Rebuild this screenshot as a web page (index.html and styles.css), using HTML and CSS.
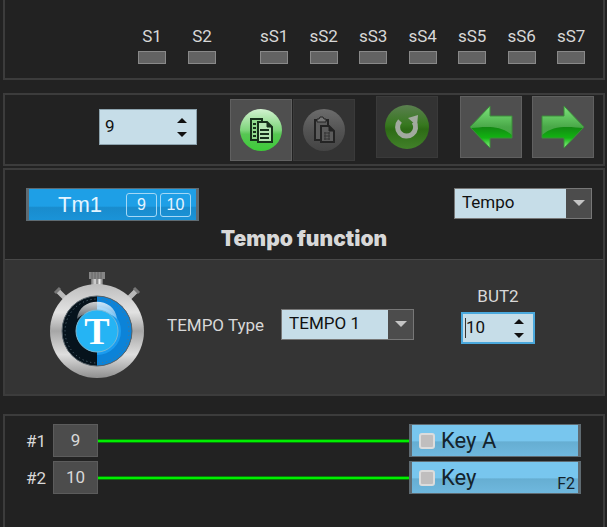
FILE: index.html
```html
<!doctype html>
<html lang="en">
<head>
  <meta charset="UTF-8"/>
  <meta name="viewport" content="width=device-width, initial-scale=1.0"/>
  <title>Tempo function</title>
  <link rel="stylesheet" href="styles.css">
</head>
<body>
  <section class="panel status">
    <div class="leds leds-main">
      <div class="led">S1</div>
      <div class="led">S2</div>
    </div>
    <div class="leds leds-sub">
      <div class="led">sS1</div>
      <div class="led">sS2</div>
      <div class="led">sS3</div>
      <div class="led">sS4</div>
      <div class="led">sS5</div>
      <div class="led">sS6</div>
      <div class="led">sS7</div>
    </div>
  </section>

  <section class="panel toolbar">
    <div class="spinner spinner-large">
      <input type="number" id="slotInput" value="9" aria-label="Slot"/>
      <div class="spinner-buttons">
        <button type="button" class="up" aria-label="Up"></button>
        <button type="button" class="down" aria-label="Down"></button>
      </div>
    </div>

    <div class="tool-group clipboard">
      <button type="button" class="tool" aria-label="Copy">
        <svg width="44" height="44" viewBox="0 0 44 44">
          <defs>
            <linearGradient id="ballGreen" x1="0" y1="0" x2="0" y2="1">
              <stop offset="0" stop-color="#d2f2d0"/>
              <stop offset="0.5" stop-color="#7fd57c"/>
              <stop offset="0.6" stop-color="#57c653"/>
              <stop offset="1" stop-color="#3ccc38"/>
            </linearGradient>
          </defs>
          <circle cx="22" cy="22" r="21" fill="url(#ballGreen)"/>
          <path d="M12 11h11v3h-4v18h-7z" fill="#8fd88c" stroke="#16301a" stroke-width="2"/>
          <path d="M14 16h3M14 20h3M14 24h3M14 28h3" stroke="#16301a" stroke-width="2"/>
          <path d="M19 14h9l5 5v15H19z" fill="#b4e5b1" stroke="#16301a" stroke-width="2"/>
          <path d="M28 14v5h5z" fill="#16301a" stroke="#16301a"/>
          <path d="M21 22h9M21 26h9M21 30h9" stroke="#16301a" stroke-width="2"/>
        </svg>
      </button>
      <button type="button" class="tool" aria-label="Paste" disabled>
        <svg width="44" height="44" viewBox="0 0 44 44">
          <defs>
            <linearGradient id="ballGray" x1="0" y1="0" x2="0" y2="1">
              <stop offset="0" stop-color="#6c6c6c"/>
              <stop offset="0.55" stop-color="#525252"/>
              <stop offset="1" stop-color="#444"/>
            </linearGradient>
          </defs>
          <circle cx="22" cy="22" r="21" fill="url(#ballGray)"/>
          <path d="M13 12h13v20H13z" fill="#5c5c5c" stroke="#242424" stroke-width="2"/>
          <path d="M15 14v-3h2l1-2h3l1 2h2v3z" fill="#777" stroke="#242424"/>
          <path d="M19 18h8l5 5v11H19z" fill="#5c5c5c" stroke="#242424" stroke-width="2"/>
          <path d="M27 18v5h5z" fill="#242424" stroke="#242424"/>
          <path d="M22 25h6M22 28h6M22 31h6M23 24v8M27 24v8" stroke="#343434"/>
        </svg>
      </button>
    </div>

    <button type="button" class="tool reset" aria-label="Reset" disabled>
      <svg width="46" height="46" viewBox="0 0 46 46">
        <defs>
          <linearGradient id="ballReset" x1="0" y1="0" x2="0" y2="1">
            <stop offset="0" stop-color="#5b7f50"/>
            <stop offset="0.45" stop-color="#37781f"/>
            <stop offset="0.55" stop-color="#2d6b15"/>
            <stop offset="1" stop-color="#42812a"/>
          </linearGradient>
        </defs>
        <circle cx="23" cy="23" r="22" fill="url(#ballReset)"/>
        <path d="M16 17a9 9 0 1 0 14 1" fill="none" stroke="#a2aa9f" stroke-width="5"/>
        <path d="M24 14l10-3l-1 11z" fill="#a2aa9f"/>
      </svg>
    </button>

    <div class="tool-group nav">
      <button type="button" class="tool" aria-label="Previous">
        <svg width="44" height="44" viewBox="0 0 44 44">
          <defs>
            <linearGradient id="arrowTop" x1="0" y1="0" x2="0" y2="1">
              <stop offset="0" stop-color="#7ee57c"/>
              <stop offset="0.5" stop-color="#49a848"/>
              <stop offset="1" stop-color="#3fa03e"/>
            </linearGradient>
            <linearGradient id="arrowLow" x1="0" y1="0" x2="0" y2="1">
              <stop offset="0" stop-color="#128812"/>
              <stop offset="0.5" stop-color="#12b412"/>
              <stop offset="1" stop-color="#a4ff9c"/>
            </linearGradient>
            <clipPath id="arrowClip"><path d="M1 22L21 1V11H43V33H21V43z"/></clipPath>
            <g id="arrowShape">
              <path d="M1 22L21 1V11H43V33H21V43z" fill="url(#arrowTop)"/>
              <path d="M1 23C15 22 32 19 44 31V44H1z" fill="url(#arrowLow)" clip-path="url(#arrowClip)"/>
              <path d="M1 22L21 1V11H43V33H21V43z" fill="none" stroke="#3c8d3b"/>
            </g>
          </defs>
          <use href="#arrowShape"/>
        </svg>
      </button>
      <button type="button" class="tool" aria-label="Next">
        <svg width="44" height="44" viewBox="0 0 44 44">
          <use href="#arrowShape" transform="translate(44 0) scale(-1 1)"/>
        </svg>
      </button>
    </div>
  </section>

  <section class="panel function">
    <div class="function-header">
      <div class="timer-tag">
        <span class="timer-name">Tm1</span>
        <span class="slot">9</span>
        <span class="slot">10</span>
      </div>
      <div class="select select-function">
        <select aria-label="Function">
          <option>Tempo</option>
        </select>
      </div>
    </div>
    <h1>Tempo function</h1>

    <div class="function-body">
      <svg class="stopwatch" width="94" height="108" viewBox="0 0 94 108">
        <defs>
          <linearGradient id="steel" x1="0" y1="0" x2="0" y2="1">
            <stop offset="0" stop-color="#bdbdbd"/>
            <stop offset="0.3" stop-color="#e2e2e2"/>
            <stop offset="0.5" stop-color="#a6a6a6"/>
            <stop offset="0.75" stop-color="#dedede"/>
            <stop offset="1" stop-color="#8f8f8f"/>
          </linearGradient>
          <linearGradient id="knob" x1="0" y1="0" x2="1" y2="0">
            <stop offset="0" stop-color="#6d6d6d"/>
            <stop offset="0.35" stop-color="#ddd"/>
            <stop offset="0.5" stop-color="#777"/>
            <stop offset="0.7" stop-color="#eee"/>
            <stop offset="1" stop-color="#666"/>
          </linearGradient>
          <linearGradient id="gloss" x1="0" y1="0" x2="0" y2="1">
            <stop offset="0" stop-color="#fff" stop-opacity="0.8"/>
            <stop offset="1" stop-color="#fff" stop-opacity="0.35"/>
          </linearGradient>
        </defs>
        <path d="M41 7h12v10H41z" fill="url(#knob)"/>
        <path d="M39 1h16v7H39z" fill="#858585"/>
        <path d="M42 1v7M45 1v7M48 1v7M51 1v7" stroke="#666"/>
        <path d="M8 20l7 7M86 20l-7 7" stroke="#b8b8b8" stroke-width="5"/>
        <path d="M5 22l5-5M89 22l-5-5" stroke="#777" stroke-width="3"/>
        <circle cx="47" cy="60" r="47" fill="url(#steel)"/>
        <circle cx="47" cy="60" r="35" fill="#06131c"/>
        <path d="M47 25a35 35 0 0 1 0 70z" fill="#0c83d8"/>
        <path d="M47 36a24 24 0 0 1 0 48z" fill="#1a9cf0"/>
        <circle cx="47" cy="60" r="32" fill="none" stroke="#5d7482" stroke-dasharray="1 3"/>
        <path d="M27 48C29 25 65 25 67 48C57 38 37 38 27 48z" fill="url(#gloss)"/>
        <circle cx="47" cy="60" r="21" fill="#25b4f4" stroke="#79bad6"/>
        <text x="47" y="73" class="stopwatch-letter">T</text>
        <circle cx="47" cy="60" r="35" fill="none" stroke="#59646b"/>
      </svg>

      <label class="type-label" for="tempoType">TEMPO Type</label>
      <div class="select select-type">
        <select id="tempoType">
          <option>TEMPO 1</option>
        </select>
      </div>

      <div class="but">
        <label for="but2">BUT2</label>
        <div class="spinner spinner-active">
          <input type="number" id="but2" value="10"/>
          <div class="spinner-buttons">
            <button type="button" class="up" aria-label="Up"></button>
            <button type="button" class="down" aria-label="Down"></button>
          </div>
        </div>
      </div>
    </div>
  </section>

  <section class="panel outputs">
    <div class="output">
      <span class="output-id">#1</span>
      <span class="output-slot">9</span>
      <span class="wire"></span>
      <div class="key">
        <input type="checkbox" id="key1"/>
        <label for="key1">Key A</label>
      </div>
    </div>
    <div class="output">
      <span class="output-id">#2</span>
      <span class="output-slot">10</span>
      <span class="wire"></span>
      <div class="key">
        <input type="checkbox" id="key2"/>
        <label for="key2">Key</label>
        <span class="key-code">F2</span>
      </div>
    </div>
  </section>

  <script>
    // Spinner arrows step the number next to them
    document.querySelectorAll('.spinner').forEach(spinner => {
      const input = spinner.querySelector('input');
      spinner.querySelector('.up').addEventListener('click', () => input.stepUp());
      spinner.querySelector('.down').addEventListener('click', () => input.stepDown());
    });
  </script>
</body>
</html>
```
FILE: styles.css
```css
* {
  box-sizing: border-box;
}

body {
  margin: 0;
  padding: 0 2px 0 3px;
  min-height: 100vh;
  display: flex;
  flex-direction: column;
  background: #222;
  color: #d8d8d8;
  font-family: Roboto, "Liberation Sans", sans-serif;
  font-size: 17px;
  line-height: 22px;
}

button, input, select {
  font: inherit;
  margin: 0;
}

.panel {
  border: 2px solid #3c3c3c;
}

/* Status leds */
.status {
  display: flex;
  gap: 44px;
  border-top: none;
  padding: 25px 18px 14px 133px;
}

.leds {
  display: flex;
  justify-content: space-between;
}

.leds-main {
  width: 78px;
}

.leds-sub {
  flex: 1;
}

.led {
  width: 28px;
  text-align: center;
}

.led::after {
  content: "";
  display: block;
  height: 11px;
  margin-top: 4px;
  background: #636363;
  border: 1px solid #898989;
}

/* Toolbar */
.toolbar {
  display: flex;
  align-items: flex-start;
  margin-top: 13px;
  padding: 1px 9px 3px 94px;
}

.spinner {
  display: flex;
  width: 74px;
  height: 32px;
  background: #c6dde8;
  border: 1px solid #8da3ae;
}

.spinner-large {
  width: 98px;
  height: 36px;
  margin-top: 13px;
}

.spinner-active {
  border: 2px solid #4aa8dc;
}

.spinner input {
  flex: 1;
  width: 0;
  padding: 0 0 2px 5px;
  border: none;
  outline: none;
  background: none;
  color: #111;
  appearance: textfield;
}

.spinner input::-webkit-inner-spin-button {
  appearance: none;
}

.spinner-active input {
  padding-left: 3px;
  background: linear-gradient(#333, #333) 2px 4px / 1px 20px no-repeat;
}

.spinner-buttons {
  display: flex;
  flex-direction: column;
  justify-content: center;
  width: 29px;
}

.spinner-buttons button {
  display: flex;
  flex: 1;
  align-items: center;
  justify-content: center;
  max-height: 14px;
  padding: 0;
  border: none;
  background: none;
}

.spinner-buttons button::before {
  content: "";
  border: 5px solid transparent;
}

.spinner-buttons .up::before {
  border-top: none;
  border-bottom-color: #111;
}

.spinner-buttons .down::before {
  border-bottom: none;
  border-top-color: #111;
}

.tool-group {
  display: flex;
}

.clipboard {
  gap: 1px;
  margin: 3px 0 0 33px;
}

.reset {
  margin-left: 21px;
}

.nav {
  gap: 10px;
  margin-left: auto;
}

.tool {
  display: flex;
  align-items: center;
  justify-content: center;
  width: 62px;
  height: 62px;
  padding: 0;
  background: #4f4f4f;
  border: 1px solid #606060;
}

.tool:disabled {
  background: #333;
  border-color: #3a3a3a;
}

/* Function panel */
.function {
  margin-top: 2px;
}

.function-header {
  display: flex;
  justify-content: space-between;
  padding: 18px 11px 0 21px;
}

.timer-tag {
  display: flex;
  align-items: center;
  gap: 3px;
  width: 173px;
  height: 33px;
  padding-right: 5px;
  border: 1px solid #5f6b72;
  border-width: 1px 3px;
  background: linear-gradient(#1e9fe6 55%, #198ccd 60%, #1a93d8);
  color: #e4f4ff;
  font-family: "Liberation Sans", sans-serif;
}

.timer-name {
  flex: 1;
  padding-left: 8px;
  font-size: 22px;
  text-align: center;
}

.slot {
  width: 31px;
  height: 24px;
  border: 1px solid #a4d8f6;
  border-radius: 3px;
  font-size: 16px;
  text-align: center;
}

.select {
  display: flex;
  position: relative;
  width: 133px;
  height: 31px;
}

.select-function {
  width: 138px;
}

.select select {
  width: 100%;
  padding: 0 32px 3px 7px;
  border: 1px solid #777;
  border-radius: 0;
  outline: none;
  background: linear-gradient(#4c4c4c, #4c4c4c) right / 25px 100% no-repeat #c6dde8;
  color: #111;
  appearance: none;
}

.select::after {
  content: "";
  position: absolute;
  right: 7px;
  top: 12px;
  border: 6px solid transparent;
  border-top-color: #c4c4c4;
  border-bottom: none;
  pointer-events: none;
}

h1 {
  margin: 6px 0 8px;
  font-family: Inter, "Open Sans", sans-serif;
  font-size: 21px;
  font-weight: 900;
  line-height: 24px;
  text-align: center;
}

.function-body {
  display: flex;
  align-items: flex-start;
  padding: 11px 68px 15px 45px;
  background: #343434;
  border-top: 1px solid #484848;
}

.type-label {
  margin: 43px 0 0 23px;
}

.select-type {
  margin: 38px 0 0 17px;
}

.but {
  margin: 14px 0 0 auto;
}

.but label {
  display: block;
  padding-bottom: 5px;
  text-align: center;
}

.stopwatch-letter {
  fill: #fff;
  font-family: "Liberation Serif", serif;
  font-size: 38px;
  font-weight: bold;
  text-anchor: middle;
}

/* Outputs */
.outputs {
  display: flex;
  flex: 1;
  flex-direction: column;
  gap: 4px;
  margin-top: 18px;
  padding: 8px 22px 8px 21px;
  border-bottom: none;
}

.output {
  display: flex;
  align-items: center;
}

.output-id {
  width: 27px;
}

.output-slot {
  width: 45px;
  height: 33px;
  border: 1px solid #5c5c5c;
  background: #4c4c4c;
  line-height: 31px;
  text-align: center;
}

.wire {
  flex: 1;
  height: 4px;
  border: 1px solid #087808;
  border-width: 1px 0;
  background: #0e0;
}

.key {
  display: flex;
  align-items: center;
  width: 172px;
  height: 33px;
  padding: 0 3px 0 7px;
  border: 1px solid #5f6b72;
  border-width: 1px 3px;
  background: linear-gradient(#78c6ee 50%, #66aed2 55%, #6fb8de);
  color: #14232c;
}

.key input {
  width: 16px;
  height: 16px;
  border: 2px solid #dcdcdc;
  border-radius: 3px;
  background: #c0bebe;
  appearance: none;
}

.key label {
  padding-left: 6px;
  font-size: 22px;
}

.key-code {
  align-self: flex-end;
  margin-left: auto;
  font-size: 16px;
  line-height: 18px;
}
```
